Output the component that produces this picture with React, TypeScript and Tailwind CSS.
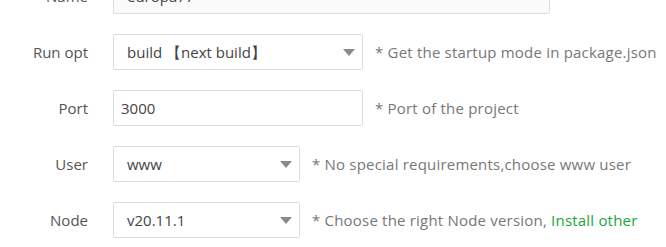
const font = { fontFamily: '"Open Sans", "Noto Sans", sans-serif' };

function Caret() {
  return (
    <svg width="12" height="7" viewBox="0 0 12 7" className="shrink-0">
      <path d="M0 0 L12 0 L6 7 Z" fill="#8a8a8a" />
    </svg>
  );
}

function Row({ label, children, hint }: { label: string; children: React.ReactNode; hint?: React.ReactNode }) {
  return (
    <div className="flex items-center h-9">
      <div className="w-[88px] text-right text-[15px] text-[#555] shrink-0">{label}</div>
      <div className="ml-[25px] flex items-center">{children}</div>
      {hint && <div className="ml-[12px] text-[15px] tracking-[0.2px] text-[#777] whitespace-nowrap">{hint}</div>}
    </div>
  );
}

function Select({ value, width }: { value: string; width: string }) {
  return (
    <div className={`${width} h-9 border border-[#dcdcdc] rounded-[2px] bg-white flex items-center justify-between pl-[13px] pr-[7px]`}>
      <span className="text-[15px] text-[#444]">{value}</span>
      <Caret />
    </div>
  );
}

export default function App() {
  return (
    <div className="w-[666px] h-[247px] bg-white overflow-hidden" style={font}>
      <div className="-mt-[22px] flex flex-col gap-5">
        <Row label="Name">
          <div className="w-[437px] h-9 border border-[#dcdcdc] rounded-[2px] bg-[#fafafa] flex items-center px-[13px] text-[15px] text-[#444]">
            europa77
          </div>
        </Row>
        <Row label="Run opt" hint="* Get the startup mode in package.json">
          <Select value="build 【next build】" width="w-[250px]" />
        </Row>
        <Row label="Port" hint="* Port of the project">
          <div className="w-[250px] h-9 border border-[#dcdcdc] rounded-[2px] bg-white flex items-center px-[7px] text-[15px] text-[#444]">
            3000
          </div>
        </Row>
        <Row label="User" hint="* No special requirements,choose www user">
          <Select value="www" width="w-[187px]" />
        </Row>
        <Row
          label="Node"
          hint={
            <>
              * Choose the right Node version, <span className="text-[#20a53a]">Install other</span>
            </>
          }
        >
          <Select value="v20.11.1" width="w-[187px]" />
        </Row>
      </div>
    </div>
  );
}
